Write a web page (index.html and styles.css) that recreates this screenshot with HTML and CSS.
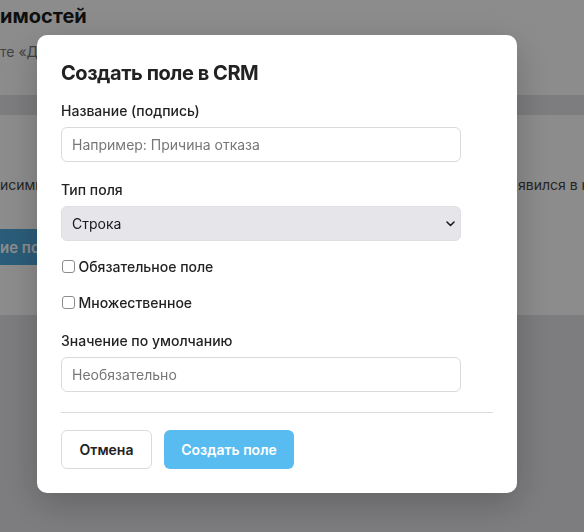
FILE: index.html
```html
<!DOCTYPE html>
<html lang="ru">
<head>
<meta charset="utf-8">
<title>Создать поле в CRM</title>
<link rel="stylesheet" href="styles.css">
</head>
<body>
<div class="page">
  <section class="card card-top">
    <h2 class="bg-title">имостей</h2>
    <p class="bg-text">те «Добавить поле», чтобы создать новое поле</p>
  </section>
  <section class="card card-main">
    <p class="bg-row"><span class="bg-left">исимые поля показываются</span><span class="bg-right">явился в к</span></p>
    <button class="bg-btn" type="button">ие поле</button>
  </section>
</div>

<div class="overlay">
  <div class="modal">
    <h3 class="modal-title">Создать поле в CRM</h3>

    <div class="field">
      <label class="field-label" for="name">Название (подпись)</label>
      <input class="text-input" id="name" type="text" placeholder="Например: Причина отказа">
    </div>

    <div class="field field-select">
      <label class="field-label" for="type">Тип поля</label>
      <div class="select-wrap">
        <select class="select-input" id="type">
          <option>Строка</option>
        </select>
        <svg class="select-chevron" width="9" height="6" viewBox="0 0 9 6"><path d="M1 1 L4.5 4.5 L8 1" fill="none" stroke="#1f1f1f" stroke-width="1.6" stroke-linecap="round" stroke-linejoin="round"/></svg>
      </div>
    </div>

    <label class="check-row"><input class="check" type="checkbox"><span>Обязательное поле</span></label>
    <label class="check-row check-row-last"><input class="check" type="checkbox"><span>Множественное</span></label>

    <div class="field field-last">
      <label class="field-label" for="def">Значение по умолчанию</label>
      <input class="text-input" id="def" type="text" placeholder="Необязательно">
    </div>

    <hr class="divider">

    <div class="actions">
      <button class="btn btn-secondary" type="button">Отмена</button>
      <button class="btn btn-primary" type="button">Создать поле</button>
    </div>
  </div>
</div>
</body>
</html>
```

FILE: styles.css
```css
html, body {
  margin: 0;
  padding: 0;
}

body {
  width: 584px;
  height: 532px;
  overflow: hidden;
  background: #e3e3e8;
  font-family: Inter, "Noto Sans", "Liberation Sans", sans-serif;
  color: #222;
}

.page {
  display: flex;
  flex-direction: column;
  gap: 20px;
}

.card {
  background: #fff;
  box-sizing: border-box;
  white-space: nowrap;
  overflow: hidden;
}

.card-top {
  height: 95px;
  padding-top: 2px;
}

.bg-title {
  margin: 0;
  font-size: 20px;
  line-height: 28px;
  font-weight: 700;
  color: #1c1c1c;
}

.bg-text {
  margin: 12px 0 0;
  font-size: 14px;
  line-height: 20px;
  color: #777;
}

.card-main {
  height: 200px;
  padding-top: 60px;
}

.bg-row {
  margin: 0;
  display: flex;
  font-size: 14px;
  line-height: 20px;
  color: #444;
}

.bg-left {
  flex: 0 0 518px;
  overflow: hidden;
}

.bg-right {
  flex: 0 0 auto;
}

.bg-btn {
  display: block;
  margin: 34px 0 0 -6px;
  height: 36px;
  padding: 0 16px 0 6px;
  border: none;
  border-radius: 6px;
  background: #4ea9dc;
  color: #fff;
  font-family: inherit;
  font-size: 15px;
  font-weight: 600;
}

.overlay {
  position: fixed;
  inset: 0;
  background: rgba(0, 0, 0, 0.45);
  display: flex;
  align-items: flex-start;
  justify-content: flex-start;
  padding: 35px 0 0 37px;
  box-sizing: border-box;
}

.modal {
  width: 480px;
  box-sizing: border-box;
  padding: 24px;
  background: #fff;
  border-radius: 10px;
  box-shadow: 0 10px 36px rgba(0, 0, 0, 0.22);
}

.modal-title {
  margin: 0 0 14px;
  font-size: 20px;
  line-height: 28px;
  font-weight: 700;
  letter-spacing: -0.45px;
  color: #222;
}

.field {
  display: flex;
  flex-direction: column;
  gap: 6px;
  margin-bottom: 18px;
}

.field-select {
  margin-bottom: 16px;
}

.field-last {
  margin-bottom: 0;
}

.field-label {
  font-size: 14px;
  line-height: 20px;
  font-weight: 500;
  color: #222;
}

.text-input {
  box-sizing: border-box;
  width: 400px;
  height: 34.5px;
  padding: 0 10px;
  border: 1px solid #dadada;
  border-radius: 6px;
  background: #fff;
  font-family: inherit;
  font-size: 14px;
  color: #222;
  outline: none;
}

.text-input::placeholder {
  color: #777;
}

.select-wrap {
  position: relative;
  width: 400px;
}

.select-input {
  appearance: none;
  -webkit-appearance: none;
  box-sizing: border-box;
  width: 400px;
  height: 35px;
  padding: 0 10px;
  border: 1px solid #dedee3;
  border-radius: 6px;
  background: #e5e5ea;
  font-family: inherit;
  font-size: 14px;
  color: #1a1a1a;
  outline: none;
}

.select-chevron {
  position: absolute;
  right: 6px;
  top: 15px;
  pointer-events: none;
}

.check-row {
  display: flex;
  align-items: center;
  height: 20px;
  margin-bottom: 16px;
  font-size: 14px;
  line-height: 20px;
  font-weight: 500;
  color: #222;
}

.check-row-last {
  margin-bottom: 18.5px;
}

.check {
  appearance: none;
  -webkit-appearance: none;
  box-sizing: border-box;
  width: 13.5px;
  height: 13.5px;
  margin: 0 3.5px 0 0.5px;
  border: 1px solid #8c8c8c;
  border-radius: 3px;
  background: #fff;
}

.divider {
  margin: 20.5px 0 17px;
  border: none;
  border-top: 1px solid #dcdcdc;
  height: 0;
}

.actions {
  display: flex;
  gap: 12px;
}

.btn {
  height: 38.5px;
  padding: 0 12px;
  border-radius: 6px;
  font-family: inherit;
  font-size: 14px;
  font-weight: 600;
  white-space: nowrap;
  box-sizing: border-box;
}

.btn-secondary {
  width: 91px;
  background: #fff;
  border: 1px solid #dadada;
  color: #222;
}

.btn-primary {
  width: 130px;
  background: #59bcf1;
  border: none;
  color: #fff;
}
```
